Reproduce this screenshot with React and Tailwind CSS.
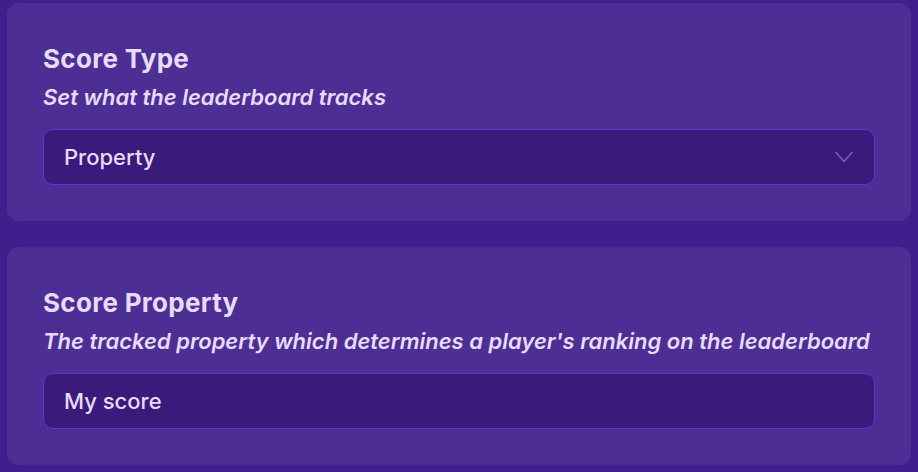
/**
 * Leaderboard settings: score type + score property.
 */

const Chevron = () => (
  <svg width="18" height="12" viewBox="0 0 18 12" fill="none" className="shrink-0">
    <path d="M1 1.5 L9 10.5 L17 1.5" stroke="#7a5fb4" strokeWidth="1.6" strokeLinecap="round" strokeLinejoin="round" />
  </svg>
);

const Section = ({ title, hint, children }) => (
  <div className="rounded-xl bg-[#4d2e94] pl-9 pr-9 pt-10 pb-9">
    <h2 className="text-[26px] leading-8 font-bold tracking-[0.3px] text-[#e6dcf7]">{title}</h2>
    <p className="mt-2 text-[22px] leading-7 italic font-semibold text-[#e6dcf7]">{hint}</p>
    <div className="mt-[18px]">{children}</div>
  </div>
);

const App = () => {
  return (
    <div className="w-[918px] h-[472px] overflow-hidden bg-[#401f8c] px-[7px] pt-[3px] flex flex-col gap-[26px] font-['Inter',sans-serif]">
      <Section title="Score Type" hint="Set what the leaderboard tracks">
        <div className="h-14 rounded-[10px] border border-[#5c35d2] bg-[#3a1a7b] flex items-center justify-between pl-5 pr-[21px]">
          <span className="text-[22px] font-medium text-[#e6dcf7]">Property</span>
          <Chevron />
        </div>
      </Section>

      <Section title="Score Property" hint="The tracked property which determines a player's ranking on the leaderboard">
        <div className="h-14 rounded-[10px] border border-[#5c35d2] bg-[#3a1a7b] flex items-center pl-5 pr-5">
          <span className="text-[22px] font-medium text-[#e6dcf7]">My score</span>
        </div>
      </Section>
    </div>
  );
};

export default App;
